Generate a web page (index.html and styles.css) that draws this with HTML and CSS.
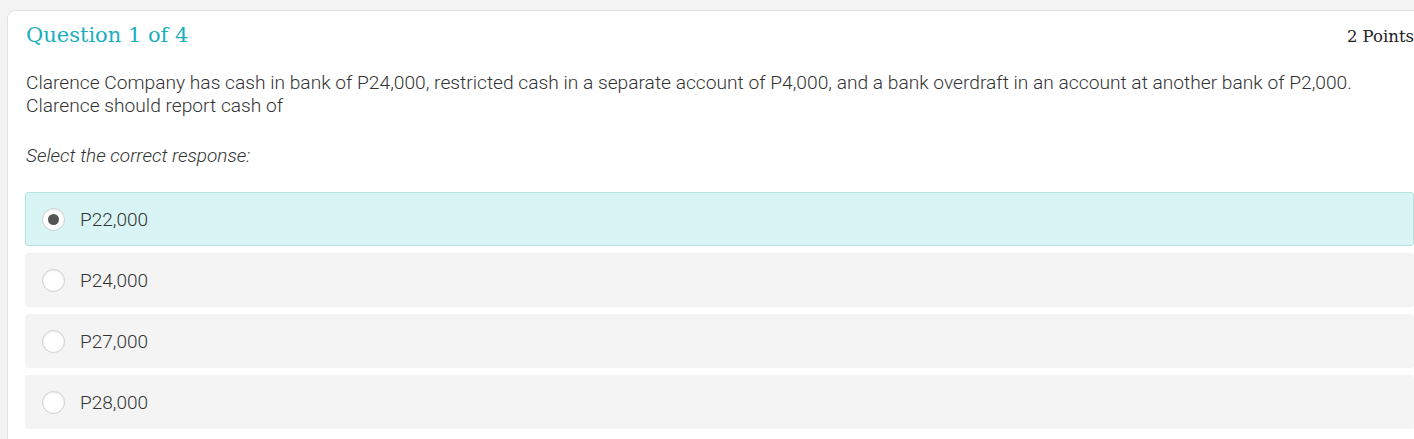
FILE: index.html
```html
<!DOCTYPE html>
<html lang="en">
  <head>
    <meta charset="UTF-8" />
    <meta name="viewport" content="width=device-width, initial-scale=1.0" />
    <title>Quiz</title>
    <link rel="stylesheet" href="styles.css">
  </head>
  <body>
    <div class="card">
      <div class="card-head">
        <h2 class="q-title">Question 1 of 4</h2>
        <span class="q-points">2 Points</span>
      </div>

      <p class="q-text">
        Clarence Company has cash in bank of P24,000, restricted cash in a separate account of P4,000, and a bank overdraft in an account at another bank of P2,000.<br>
        Clarence should report cash of
      </p>

      <p class="q-hint">Select the correct response:</p>

      <div class="options">
        <label class="option option-selected">
          <span class="radio radio-on"></span>
          <span class="option-text">P22,000</span>
        </label>
        <label class="option">
          <span class="radio"></span>
          <span class="option-text">P24,000</span>
        </label>
        <label class="option">
          <span class="radio"></span>
          <span class="option-text">P27,000</span>
        </label>
        <label class="option">
          <span class="radio"></span>
          <span class="option-text">P28,000</span>
        </label>
      </div>
    </div>
  </body>
</html>
```

FILE: styles.css
```css
* {
  box-sizing: border-box;
}
body {
  margin: 0;
  background-color: #F3F3F3;
  overflow: hidden;
  font-family: Roboto, "Liberation Sans", sans-serif;
  color: #333;
}

.card {
  margin: 10px 0 0 7px;
  width: 1440px;
  height: 440px;
  background-color: #FFF;
  border: 1px solid #E2E2E2;
  border-radius: 8px;
  padding: 12px 32px 0 18px;
}

.card-head {
  display: flex;
  justify-content: space-between;
  align-items: baseline;
}
.q-title {
  margin: 0;
  font-family: "DejaVu Serif", serif;
  font-weight: normal;
  font-size: 21px;
  color: #1AAEBE;
}
.q-points {
  font-family: "DejaVu Serif", serif;
  font-size: 16.5px;
  color: #222;
}

.q-text {
  margin: 24px 0 0;
  font-size: 19.2px;
  font-weight: 300;
  line-height: 23px;
}
.q-hint {
  margin: 27px 0 0;
  font-size: 19px;
  font-weight: 300;
  font-style: italic;
  line-height: 23px;
}

.options {
  margin: 25px 0 0 -1px;
  display: flex;
  flex-direction: column;
  gap: 7px;
}
.option {
  display: flex;
  align-items: center;
  height: 54px;
  padding-left: 16px;
  background-color: #F4F4F4;
  border: 1px solid #F4F4F4;
  border-radius: 3px;
  cursor: pointer;
}
.option-selected {
  background-color: #D9F4F4;
  border-color: #B9E3E1;
}
.radio {
  position: relative;
  width: 23px;
  height: 23px;
  border-radius: 50%;
  background-color: #FFF;
  border: 1px solid #CFCFCF;
  box-shadow: inset 0 1px 2px rgba(0, 0, 0, 0.08);
}
.radio-on::after {
  content: "";
  position: absolute;
  top: 5px;
  left: 5px;
  width: 11px;
  height: 11px;
  border-radius: 50%;
  background-color: #555;
}
.option-text {
  margin-left: 15px;
  font-size: 19px;
  font-weight: 300;
}
```
